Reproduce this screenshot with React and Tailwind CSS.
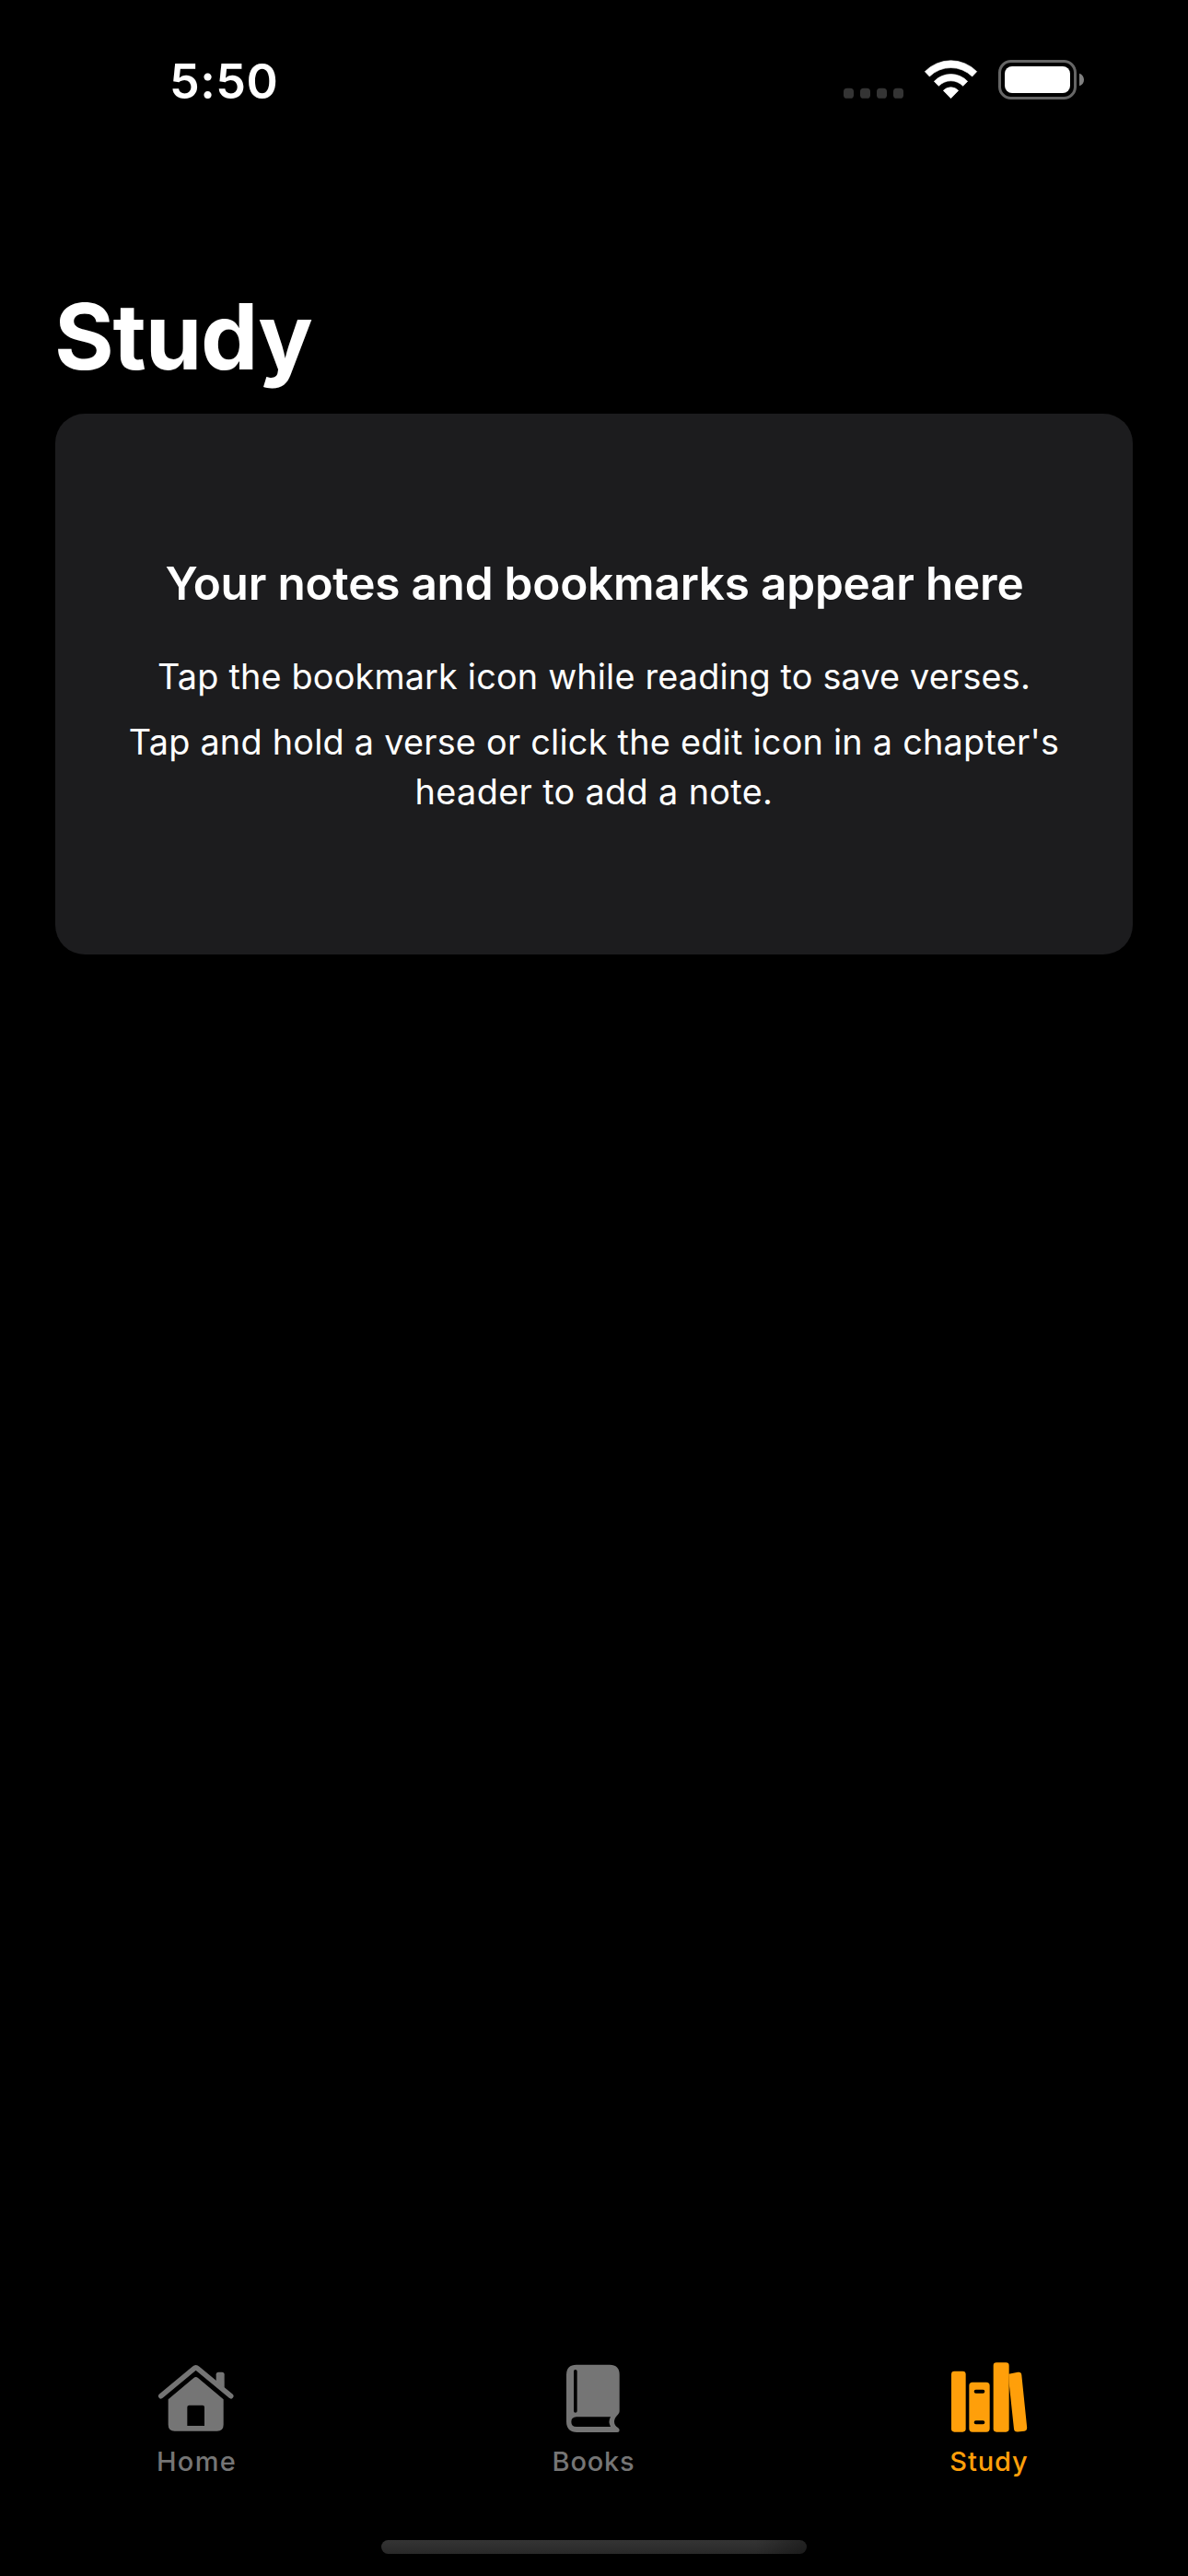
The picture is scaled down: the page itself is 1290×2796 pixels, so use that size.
function StatusIcons() {
  return (
    <svg className="h-[80px] w-[300px]" viewBox="0 0 900 240" fill="none">
      <g fill="#343434">
        <rect x="48" y="137.5" width="33" height="33" rx="11" />
        <rect x="102" y="137.5" width="33" height="33" rx="11" />
        <rect x="156" y="137.5" width="33" height="33" rx="11" />
        <rect x="210" y="137.5" width="33" height="33" rx="11" />
      </g>
      <g fill="#fff" stroke="#fff" strokeWidth="2" strokeLinejoin="round">
        <path d="M313 83A118 118 0 0 1 482 83L467 99A99 99 0 0 0 328 99Z" />
        <path d="M343 115A75 75 0 0 1 452 115L437 130A55 55 0 0 0 358 130Z" />
        <path d="M373 145A33 33 0 0 1 422 145L397.5 170Z" />
      </g>
      <rect x="556.5" y="49.5" width="246" height="120" rx="37" stroke="#666" strokeWidth="9" />
      <rect x="573" y="66" width="213" height="87" rx="24" fill="#fff" />
      <path d="M816 89C836 95 836 124 816 130Z" fill="#808080" />
    </svg>
  );
}

function HomeIcon() {
  return (
    <svg className="h-[103px] w-[130px]" viewBox="0 0 390 309" fill="currentColor">
      <path d="M74.500 152L182 62.500Q188 57.500 194 62.500L302 152" fill="none" stroke="currentColor" strokeWidth="17" strokeLinecap="round" strokeLinejoin="round" />
      <path d="M254 104V82Q254 74 262 74H273Q281 74 281 82V126Z" />
      <path fillRule="evenodd" d="M98 163L181 93Q188 87 195 93L278 163V245Q278 266 257 266H119Q98 266 98 245ZM166 182Q160 182 160 188V249H216V188Q216 182 210 182Z" />
    </svg>
  );
}

function BookIcon() {
  return (
    <svg className="h-[103px] w-[130px]" viewBox="0 0 390 309" fill="currentColor">
      <path
        fillRule="evenodd"
        d="M138 50H246Q278 50 278 82V202Q278 207 273 212Q261 223 261 236Q261 247 273 255Q278 258 278 263Q278 270 271 270H140Q105 270 105 235V83Q105 50 138 50ZM134.500 66Q129 66 129 71V201Q129 206 134.500 206Q140 206 140 201V71Q140 66 134.500 66ZM138 220Q121 221 121 236Q121 252 138 252H249Q240 236 249 220Z"
      />
    </svg>
  );
}

function LibraryIcon() {
  return (
    <svg className="h-[103px] w-[130px]" viewBox="0 0 390 309" fill="currentColor">
      <rect x="69" y="71" width="47" height="198" rx="10" />
      <path
        fillRule="evenodd"
        d="M138 107H183Q194 107 194 118V258Q194 269 183 269H138Q127 269 127 258V118Q127 107 138 107ZM149 131A6 6 0 0 0 149 143H172A6 6 0 0 0 172 131ZM149 232A6 6 0 0 0 149 244H172A6 6 0 0 0 172 232Z"
      />
      <rect x="206" y="43" width="51" height="226" rx="10" />
      <path d="M256 80L286 74.500Q297 73 298 84L315.500 254Q316 264 307 266L286 268.500Q274 270 273 259L257 110Z" />
    </svg>
  );
}

const tabs = [
  { label: "Home", Icon: HomeIcon, color: "text-[#757575]", text: "tracking-[1.3px] pr-[3px]" },
  { label: "Books", Icon: BookIcon, color: "text-[#757575]", text: "tracking-[0.8px] pr-px" },
  { label: "Study", Icon: LibraryIcon, color: "text-[#ff9f0a]", text: "tracking-[0.9px] pr-[2px]" },
];

export default function App() {
  return (
    <div className="flex h-[2796px] w-[1290px] flex-col bg-black font-['Inter','Liberation_Sans',sans-serif] text-white">
      <header className="flex h-[130px] items-start justify-between pt-[50px] pr-[90px] pl-[184px]">
        <div className="mt-[9px] text-[52px] leading-[60px] font-[560] tracking-[0.5px]">5:50</div>
        <StatusIcons />
      </header>

      <main className="flex flex-1 flex-col px-[60px] pt-[175px]">
        <h1 className="-ml-px text-[99px] leading-[120px] font-bold tracking-[-1.2px]">Study</h1>
        <section className="mt-6 flex h-[587px] flex-col items-center rounded-[32px] bg-[#1c1c1e] pt-[154px] text-center">
          <h2 className="pl-px text-[49.5px] leading-[60px] font-semibold tracking-[-0.22px]">Your notes and bookmarks appear here</h2>
          <p className="mt-[44px] text-[37.8px] leading-[54px] tracking-[0.18px]">Tap the bookmark icon while reading to save verses.</p>
          <p className="mt-[17px] text-[37.8px] leading-[54px] tracking-[0.24px]">
            Tap and hold a verse or click the edit icon in a chapter's
            <br />
            <span className="tracking-[0.36px]">header to add a note.</span>
          </p>
        </section>
      </main>

      <nav className="grid h-[207px] grid-cols-3">
        {tabs.map(({ label, Icon, color, text }) => (
          <a key={label} className={`flex flex-col items-center ${color}`}>
            <Icon />
            <span className={`mt-px text-[29px] leading-9 font-[450] ${text}`}>{label}</span>
          </a>
        ))}
      </nav>
      <footer className="flex h-[39px] justify-center">
        <div className="h-[15px] w-[462px] rounded-full bg-[linear-gradient(90deg,transparent_88%,rgba(0,0,0,0.35)),linear-gradient(#343434,#292929)]" />
      </footer>
    </div>
  );
}
